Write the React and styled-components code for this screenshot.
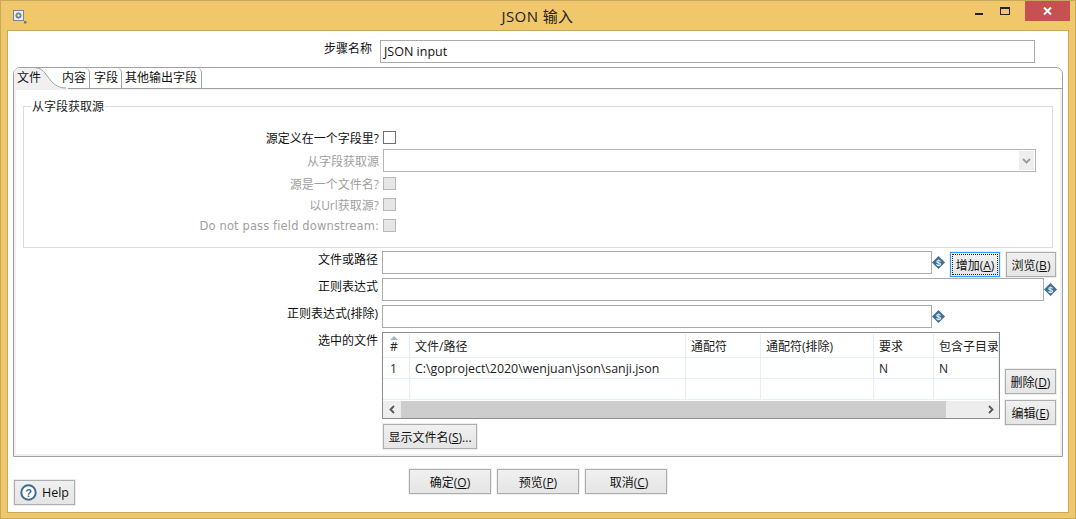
import React from 'react';
import styled, { createGlobalStyle } from 'styled-components';

const Global = createGlobalStyle`
  html, body { margin: 0; padding: 0; background: #f0c76b; }
  body { font-family: "Open Sans", "Noto Sans CJK SC", sans-serif; font-size: 12px; color: #111; }
  * { box-sizing: border-box; }
`;

const Win = styled.div`
  width: 1076px; height: 519px; background: #f0c76b; border: 1px solid #c8a85a;
  display: flex; flex-direction: column; overflow: hidden;
`;
const TitleBar = styled.div`
  height: 29px; flex: none; display: grid; grid-template-columns: 1fr auto 1fr; padding-left: 12px;
`;
const TitleIcon = styled.div` padding-top: 9px; `;
const Title = styled.div` font-size: 15px; line-height: 30px; padding-right: 13px; letter-spacing: 0.4px; color: #222; `;
const Controls = styled.div` display: flex; justify-content: flex-end; align-items: flex-start; padding-right: 5px; `;
const Ctl = styled.div`
  width: 26px; height: 20px; display: flex; align-items: center; justify-content: center;
  padding-top: ${p => p.$pt || 0}px;
`;
const Close = styled.div`
  width: 45px; height: 20px; margin-left: 7px; background: #c75050; display: flex; align-items: center; justify-content: center;
`;
const Content = styled.div`
  margin: 0 6px; height: 483px; background: #fff; border: 1px solid #c8a85a; padding: 9px 5px 0 5px;
  display: flex; flex-direction: column;
`;
const NameRow = styled.div` display: grid; grid-template-columns: 367px 655px; height: 23px; margin-bottom: 4px; `;
const NameLabel = styled.div` text-align: right; line-height: 17px; padding-right: 8px; `;
const Input = styled.div`
  height: 23px; width: ${p => p.$w ? p.$w + 'px' : 'auto'}; flex: none; border: 1px solid #ababab; background: #fff;
  padding-left: 3px; line-height: 21px; font-size: 12.5px;
`;
const Panel = styled.div`
  height: 390px; flex: none; border: 1px solid #a0a0a0; border-radius: 7px 7px 0 0; display: flex; flex-direction: column;
`;
const TabStrip = styled.div`
  height: 21px; flex: none; display: flex; border-bottom: 1px solid #a0a0a0; position: relative;
`;
const ActiveTab = styled.div`
  width: 48px; height: 20px; padding-left: 3px; line-height: 20px; position: relative; z-index: 1; font-size: 12px;
  svg { position: absolute; left: 0; top: 0; z-index: -1; }
`;
const Tab = styled.div`
  height: 20px; line-height: 20px; border-right: 1px solid #a0a0a0; border-top-right-radius: 5px; font-size: 12px;
  padding: 0 ${p => p.$pr || 3}px 0 ${p => p.$pl || 0}px;
`;
const Body = styled.div`
  flex: 1; border: solid #f0f0f0; border-width: 0 2px 2px 2px; border-top: 1px solid #f0f0f0; padding-top: 16px;
`;
const Group = styled.div`
  position: relative; margin: 0 7px 3px 7px; height: 142px; border: 1px solid #dcdcdc; padding-top: 20px;
`;
const Legend = styled.div`
  position: absolute; left: 7px; top: -8px; background: #fff; padding: 0 1px; line-height: 15px; color: #222;
`;
const GRow = styled.div`
  display: grid; grid-template-columns: 355px 1fr; column-gap: 4px; align-items: center; height: ${p => p.$h || 21}px;
`;
const GLabel = styled.div`
  text-align: right; color: ${p => p.$off ? '#a0a0a0' : '#111'};
  font-family: ${p => p.$wide ? '"DejaVu Sans", sans-serif' : 'inherit'};
  font-size: ${p => p.$wide ? '11.5px' : '12px'};
  letter-spacing: ${p => p.$wide ? '0.13px' : '0'};
`;
const Check = styled.div`
  width: 13px; height: 13px; border: 1px solid ${p => p.$off ? '#b8b8b8' : '#707070'}; background: ${p => p.$off ? '#e6e6e6' : '#fff'};
`;
const Combo = styled.div`
  width: 653px; height: 23px; border: 1px solid #b4b4b4; display: flex; justify-content: flex-end; padding: 1px;
`;
const ComboArrow = styled.div`
  width: 15px; background: #eeeeee; display: flex; align-items: center; justify-content: center;
`;
const FRow = styled.div`
  display: grid; grid-template-columns: 366px 1fr; margin-bottom: 4px; height: ${p => p.$h || 23}px;
`;
const FLabel = styled.div` text-align: right; padding-right: 4px; line-height: 17px; color: #111; `;
const Ctrls = styled.div` display: flex; align-items: flex-start; `;
const Btn = styled.button`
  font: inherit; font-size: 12px; color: #111; width: ${p => p.$w}px; height: 25px; flex: none; padding: 0 0 0 ${p => p.$pl || 0}px;
  margin: ${p => p.$mt || 0}px 0 0 ${p => p.$ml || 0}px;
  background: linear-gradient(#f0f0f0, #e5e5e5); border: 1px solid #adadad;
  box-shadow: 0 0 0 1px #eeeeee;
  outline: none; display: flex; align-items: center; justify-content: center; gap: 4px;
`;
const FocusBtn = styled(Btn)`
  border: 1px solid #3399ff; position: relative;
  &::after { content: ""; position: absolute; inset: 1px; border: 1px dotted #222; }
`;
const TableCol = styled.div` display: flex; flex-direction: column; width: 618px; flex: none; gap: 5px; `;
const Table = styled.div`
  height: 87px; flex: none; border: 1px solid #8c8c8c; display: flex; flex-direction: column; padding-top: 1px; background: #fff;
`;
const TRow = styled.div`
  display: grid; grid-template-columns: 27px 276px 75px 113px 60px 65px; height: ${p => p.$h}px; flex: none;
  border-bottom: 1px solid #e6eef6;
`;
const Cell = styled.div`
  border-right: 1px solid #e6eef6; padding-left: ${p => p.$pl || 5}px; line-height: ${p => p.$lh || 22}px; overflow: hidden; white-space: nowrap;
  position: relative; color: #222; font-size: ${p => p.$fs || 12}px;
`;
const SortMark = styled.span`
  position: absolute; left: 7px; top: 2px; width: 0; height: 0;
  border-left: 4px solid transparent; border-right: 4px solid transparent; border-bottom: 4px solid #9db9cf;
`;
const Scroll = styled.div`
  height: 17px; margin-top: 1px; flex: none; display: flex; background: #ededed; align-items: stretch;
`;
const ScrollBtn = styled.div` width: 18px; display: flex; align-items: center; justify-content: center; flex: none; `;
const Thumb = styled.div` width: 545px; background: #cdcdcd; flex: none; `;
const Spacer = styled.div` flex: 1; `;
const Side = styled.div` display: flex; flex-direction: column; gap: 6px; padding-top: 37px; margin-left: 5px; `;
const Footer = styled.div` display: grid; grid-template-columns: 1fr auto 1fr; padding-top: 12px; `;
const FooterBtns = styled.div` display: flex; gap: 6px; `;
const HelpWrap = styled.div` padding-top: 11px; padding-left: 1px; `;
const HelpBtn = styled(Btn)` font-size: 12.5px; gap: 5px; `;
const DollarIcon = styled.svg` flex: none; margin-top: 5px; `;
const Dollar = () => (
  <DollarIcon width="13" height="13" viewBox="0 0 13 13">
    <path d="M6.5 0 13 6.5 6.5 13 0 6.5Z" fill="#3f6f94" />
    <text x="6.5" y="10" textAnchor="middle" fontSize="9" fontWeight="700" fontFamily="Liberation Sans" fill="#e8eef3">$</text>
  </DollarIcon>
);
const Chev = ({ d, c = '#555' }) => (
  <svg width="9" height="9" viewBox="0 0 9 9"><path d={d} fill="none" stroke={c} strokeWidth="1.8" /></svg>
);

export default function App() {
  return (
    <Win>
      <Global />
      <TitleBar>
        <TitleIcon>
          <svg width="14" height="14" viewBox="0 0 14 14">
            <rect x="0.5" y="0.5" width="10" height="10" fill="#e8eef2" stroke="#6f8796" />
            <circle cx="5.5" cy="5.5" r="2.6" fill="#8a97a0" stroke="#5e7586" />
            <circle cx="5.5" cy="5.5" r="1" fill="#fff" />
            <path d="M11 11h2.5v2.5H11z" fill="#5f7f96" />
          </svg>
        </TitleIcon>
        <Title>JSON 输入</Title>
        <Controls>
          <Ctl $pt={6}>
            <svg width="8" height="2"><rect width="8" height="2" fill="#222" /></svg>
          </Ctl>
          <Ctl>
            <svg width="10" height="8"><rect x="0.5" y="0.5" width="9" height="7" fill="none" stroke="#222" /><rect width="10" height="2" fill="#222" /></svg>
          </Ctl>
          <Close>
            <svg width="9" height="8" viewBox="0 0 9 8"><path d="M1 0.5 8 7.5M8 0.5 1 7.5" stroke="#fff" strokeWidth="2" /></svg>
          </Close>
        </Controls>
      </TitleBar>
      <Content>
        <NameRow>
          <NameLabel>步骤名称</NameLabel>
          <Input>JSON input</Input>
        </NameRow>
        <Panel>
          <TabStrip>
            <ActiveTab>
              <svg width="56" height="21" viewBox="0 0 56 21">
                <path d="M0 21V5Q0 0 6 0H22C34 0 34 20 50 20H54V21Z" fill="#f0f0f0" />
                <path d="M22 0C34 0 34 20 52 20" fill="none" stroke="#a0a0a0" />
              </svg>
              文件
            </ActiveTab>
            <Tab $pl={0} $pr={3}>内容</Tab>
            <Tab $pl={4} $pr={3}>字段</Tab>
            <Tab $pl={3} $pr={4}>其他输出字段</Tab>
          </TabStrip>
          <Body>
            <Group>
              <Legend>从字段获取源</Legend>
              <GRow>
                <GLabel>源定义在一个字段里?</GLabel>
                <Check />
              </GRow>
              <GRow $h={25}>
                <GLabel $off>从字段获取源</GLabel>
                <Combo>
                  <ComboArrow><Chev d="M1 3 4.5 6.5 8 3" c="#9a9a9a" /></ComboArrow>
                </Combo>
              </GRow>
              <GRow>
                <GLabel $off>源是一个文件名?</GLabel>
                <Check $off />
              </GRow>
              <GRow>
                <GLabel $off>以Url获取源?</GLabel>
                <Check $off />
              </GRow>
              <GRow>
                <GLabel $off $wide>Do not pass field downstream:</GLabel>
                <Check $off />
              </GRow>
            </Group>
            <FRow>
              <FLabel>文件或路径</FLabel>
              <Ctrls>
                <Input $w={550} />
                <Dollar />
                <FocusBtn $w={50} $ml={5} $mt={1}><span>增加(<u>A</u>)</span></FocusBtn>
                <Btn $w={50} $ml={6} $mt={1}><span>浏览(<u>B</u>)</span></Btn>
              </Ctrls>
            </FRow>
            <FRow>
              <FLabel>正则表达式</FLabel>
              <Ctrls>
                <Input $w={662} />
                <Dollar />
              </Ctrls>
            </FRow>
            <FRow>
              <FLabel>正则表达式(排除)</FLabel>
              <Ctrls>
                <Input $w={550} />
                <Dollar />
              </Ctrls>
            </FRow>
            <FRow $h={117}>
              <FLabel>选中的文件</FLabel>
              <Ctrls>
                <TableCol>
                  <Table>
                    <TRow $h={24}>
                      <Cell $pl={7} $lh={26}><SortMark />#</Cell>
                      <Cell $lh={26}>文件/路径</Cell>
                      <Cell $lh={26}>通配符</Cell>
                      <Cell $lh={26}>通配符(排除)</Cell>
                      <Cell $lh={26}>要求</Cell>
                      <Cell $lh={26}>包含子目录</Cell>
                    </TRow>
                    <TRow $h={21}>
                      <Cell $pl={7}>1</Cell>
                      <Cell $fs={12.4}>C:\goproject\2020\wenjuan\json\sanji.json</Cell>
                      <Cell />
                      <Cell />
                      <Cell $pl={5}>N</Cell>
                      <Cell $pl={5}>N</Cell>
                    </TRow>
                    <TRow $h={21}>
                      <Cell /><Cell /><Cell /><Cell /><Cell /><Cell />
                    </TRow>
                    <Scroll>
                      <ScrollBtn><Chev d="M6 1 2.5 4.5 6 8" /></ScrollBtn>
                      <Thumb />
                      <Spacer />
                      <ScrollBtn><Chev d="M3 1 6.5 4.5 3 8" /></ScrollBtn>
                    </Scroll>
                  </Table>
                  <Btn $w={94} $ml={1}><span>显示文件名(<u>S</u>)...</span></Btn>
                </TableCol>
                <Side>
                  <Btn $w={51}><span>删除(<u>D</u>)</span></Btn>
                  <Btn $w={51}><span>编辑(<u>E</u>)</span></Btn>
                </Side>
              </Ctrls>
            </FRow>
          </Body>
        </Panel>
        <Footer>
          <HelpWrap>
            <HelpBtn $w={61}>
              <svg width="17" height="17" viewBox="0 0 17 17">
                <circle cx="8.5" cy="8.5" r="7.2" fill="#fff" stroke="#3f6b8f" strokeWidth="2" />
                <text x="8.5" y="12.5" textAnchor="middle" fontSize="11" fontWeight="700" fontFamily="Liberation Sans" fill="#3f6b8f">?</text>
              </svg>
              Help
            </HelpBtn>
          </HelpWrap>
          <FooterBtns>
            <Btn $w={82}><span>确定(<u>O</u>)</span></Btn>
            <Btn $w={82}><span>预览(<u>P</u>)</span></Btn>
            <Btn $w={82} $pl={6}><span>取消(<u>C</u>)</span></Btn>
          </FooterBtns>
          <div />
        </Footer>
      </Content>
    </Win>
  );
}
